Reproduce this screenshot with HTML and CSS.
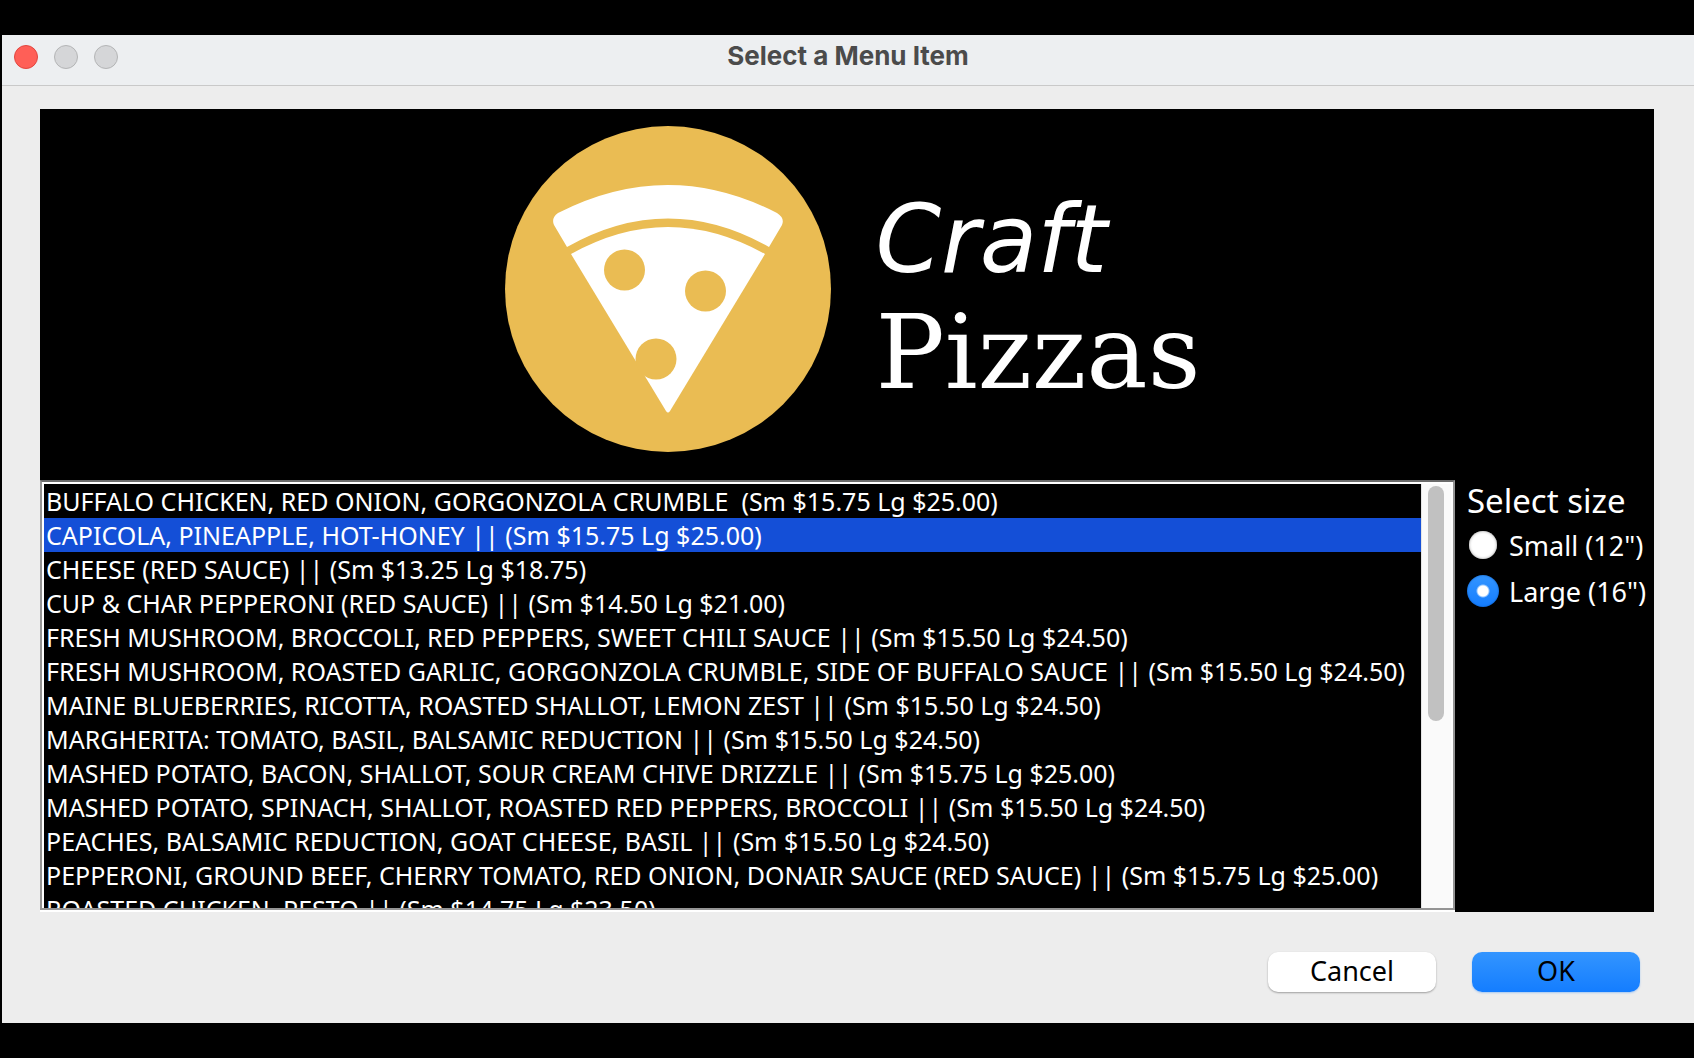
FILE: index.html
```html
<!DOCTYPE html>
<html lang="en">
<head>
<meta charset="utf-8">
<meta name="viewport" content="width=device-width, initial-scale=1">
<title>Select a Menu Item</title>
<link rel="stylesheet" href="styles.css">
</head>
<body>
<form class="window">
  <header class="titlebar">
    <div class="lights">
      <button type="button" class="light light-close" aria-label="Close"></button>
      <button type="button" class="light" aria-label="Minimize" disabled></button>
      <button type="button" class="light" aria-label="Zoom" disabled></button>
    </div>
    <h1 class="title">Select a Menu Item</h1>
  </header>
  <main class="content">
    <section class="panel">
      <div class="banner">
        <svg class="logo" viewBox="0 0 326 326" aria-hidden="true">
          <circle cx="163" cy="163" r="163" fill="#eabc53"/>
          <path fill="#fff" d="M62 121 L49 99 Q46 92 53 87 Q163 31 272 87 Q280 92 277 99 L264 121 Q163 64 62 121 Z"/>
          <path fill="#fff" d="M66 128 Q163 74 260 128 L165 285 Q163 288 161 285 Z"/>
          <circle cx="119.500" cy="144" r="20.500" fill="#eabc53"/>
          <circle cx="200.500" cy="165" r="20.500" fill="#eabc53"/>
          <circle cx="151" cy="233" r="20.500" fill="#eabc53"/>
        </svg>
        <div class="brand">
          <span class="brand-craft">Craft</span>
          <span class="brand-pizzas">Pizzas</span>
        </div>
      </div>
      <div class="chooser">
        <div class="list-frame">
          <select class="menu-list" size="12" aria-label="Menu items">
            <option>BUFFALO CHICKEN, RED ONION, GORGONZOLA CRUMBLE&nbsp; (Sm $15.75 Lg $25.00)</option>
            <option selected>CAPICOLA, PINEAPPLE, HOT-HONEY || (Sm $15.75 Lg $25.00)</option>
            <option>CHEESE (RED SAUCE) || (Sm $13.25 Lg $18.75)</option>
            <option>CUP &amp; CHAR PEPPERONI (RED SAUCE) || (Sm $14.50 Lg $21.00)</option>
            <option>FRESH MUSHROOM, BROCCOLI, RED PEPPERS, SWEET CHILI SAUCE || (Sm $15.50 Lg $24.50)</option>
            <option>FRESH MUSHROOM, ROASTED GARLIC, GORGONZOLA CRUMBLE, SIDE OF BUFFALO SAUCE || (Sm $15.50 Lg $24.50)</option>
            <option>MAINE BLUEBERRIES, RICOTTA, ROASTED SHALLOT, LEMON ZEST || (Sm $15.50 Lg $24.50)</option>
            <option>MARGHERITA: TOMATO, BASIL, BALSAMIC REDUCTION || (Sm $15.50 Lg $24.50)</option>
            <option>MASHED POTATO, BACON, SHALLOT, SOUR CREAM CHIVE DRIZZLE || (Sm $15.75 Lg $25.00)</option>
            <option>MASHED POTATO, SPINACH, SHALLOT, ROASTED RED PEPPERS, BROCCOLI || (Sm $15.50 Lg $24.50)</option>
            <option>PEACHES, BALSAMIC REDUCTION, GOAT CHEESE, BASIL || (Sm $15.50 Lg $24.50)</option>
            <option>PEPPERONI, GROUND BEEF, CHERRY TOMATO, RED ONION, DONAIR SAUCE (RED SAUCE) || (Sm $15.75 Lg $25.00)</option>
            <option>ROASTED CHICKEN, PESTO || (Sm $14.75 Lg $23.50)</option>
          </select>
          <div class="scrollbar" aria-hidden="true"><div class="thumb"></div></div>
        </div>
        <fieldset class="sizes">
          <legend class="sizes-title">Select size</legend>
          <label class="size"><input class="radio" type="radio" name="size" value="small">Small (12")</label>
          <label class="size"><input class="radio" type="radio" name="size" value="large" checked>Large (16")</label>
        </fieldset>
      </div>
    </section>
    <footer class="actions">
      <button type="button" class="button">Cancel</button>
      <button type="submit" class="button button-primary">OK</button>
    </footer>
  </main>
</form>
</body>
</html>
```
FILE: styles.css
```css
* {
  box-sizing: border-box;
}

body {
  margin: 0;
  padding: 35px 0 35px 2px;
  background: #000;
  font-family: "Noto Sans", "Open Sans", sans-serif;
}

.window {
  background: #ededed;
}

.titlebar {
  display: grid;
  grid-template-columns: 1fr auto 1fr;
  align-items: start;
  height: 51px;
  padding: 0 12px;
  background: #edeff1;
  border-bottom: 1px solid #c9c9c9;
}

.lights {
  display: flex;
  gap: 16px;
  padding-top: 10px;
}

.light {
  width: 24px;
  height: 24px;
  padding: 0;
  border: 1px solid #b4b5b6;
  border-radius: 50%;
  background: #d5d6d8;
}

.light-close {
  border-color: #e2463f;
  background: #ff5f57;
}

.title {
  margin: 0;
  color: #4b4b4b;
  font: 700 26px/42px Inter, sans-serif;
}

.content {
  padding: 23px 40px 31px 38px;
}

.panel {
  background: #000;
}

.banner {
  display: flex;
  justify-content: center;
  gap: 44px;
  padding: 17px 0 28px 12px;
}

.logo {
  width: 326px;
  height: 326px;
}

.brand {
  display: flex;
  flex-direction: column;
  padding-top: 58px;
  color: #fff;
  line-height: 112px;
}

.brand-craft {
  font-family: "DejaVu Sans", sans-serif;
  font-size: 94px;
  font-style: italic;
}

.brand-pizzas {
  font-family: "DejaVu Serif", serif;
  font-size: 103px;
}

.chooser {
  display: flex;
}

.list-frame {
  display: flex;
  flex: 1;
  min-width: 0;
  height: 430px;
  margin-bottom: 2px;
  border: 2px solid #949494;
  border-top-color: #6b6b6b;
  box-shadow: inset 0 0 0 2px #fff, 0 2px #fff;
  padding: 2px 2px 0;
}

.menu-list {
  flex: 1;
  min-width: 0;
  padding: 0;
  border: 0;
  border-radius: 0;
  outline: 0;
  overflow-y: auto;
  scrollbar-width: none;
  background: #000;
  color: #fff;
  font: 25px/34px "Noto Sans", "Open Sans", sans-serif;
}

.menu-list option {
  min-height: 34px;
  padding: 0 2px;
  color: #fff;
}

.menu-list option:checked {
  background: #144fd7 linear-gradient(#144fd7, #144fd7);
  color: #fff;
}

.scrollbar {
  width: 30px;
  padding: 2px 6px;
  background: #fafafa;
  border-left: 1px solid #e4e4e4;
}

.thumb {
  width: 16px;
  height: 56%;
  border-radius: 8px;
  background: #c1c1c1;
}

.sizes {
  display: flex;
  flex-direction: column;
  width: 199px;
  margin: 0;
  padding: 0 0 0 12px;
  border: 0;
  color: #fff;
}

.sizes-title {
  padding: 0;
  font-size: 33px;
  line-height: 42px;
}

.size {
  display: flex;
  align-items: center;
  gap: 10px;
  height: 46px;
  font-size: 27px;
  white-space: nowrap;
}

.radio {
  appearance: none;
  flex: none;
  width: 28px;
  height: 28px;
  margin: 0 2px;
  border-radius: 50%;
  background: #fff;
  box-shadow: inset 0 0 3px #999;
}

.radio:checked {
  width: 32px;
  height: 32px;
  margin: 0;
  background: radial-gradient(circle, #fff 5px, transparent 7px), linear-gradient(#3395ff, #147dff);
  box-shadow: inset 0 0 2px #0a4fa8;
}

.actions {
  display: flex;
  justify-content: flex-end;
  gap: 36px;
  padding: 40px 14px 0 0;
}

.button {
  width: 168px;
  height: 40px;
  padding: 0 0 2px;
  border: 0;
  border-radius: 10px;
  background: #fff;
  box-shadow: 0 1px 2px #0005;
  color: #000;
  font: 27px/36px "Noto Sans", "Open Sans", sans-serif;
}

.button-primary {
  background: linear-gradient(#3395ff, #147dff);
  box-shadow: 0 1px 2px #147dff55;
}
```
